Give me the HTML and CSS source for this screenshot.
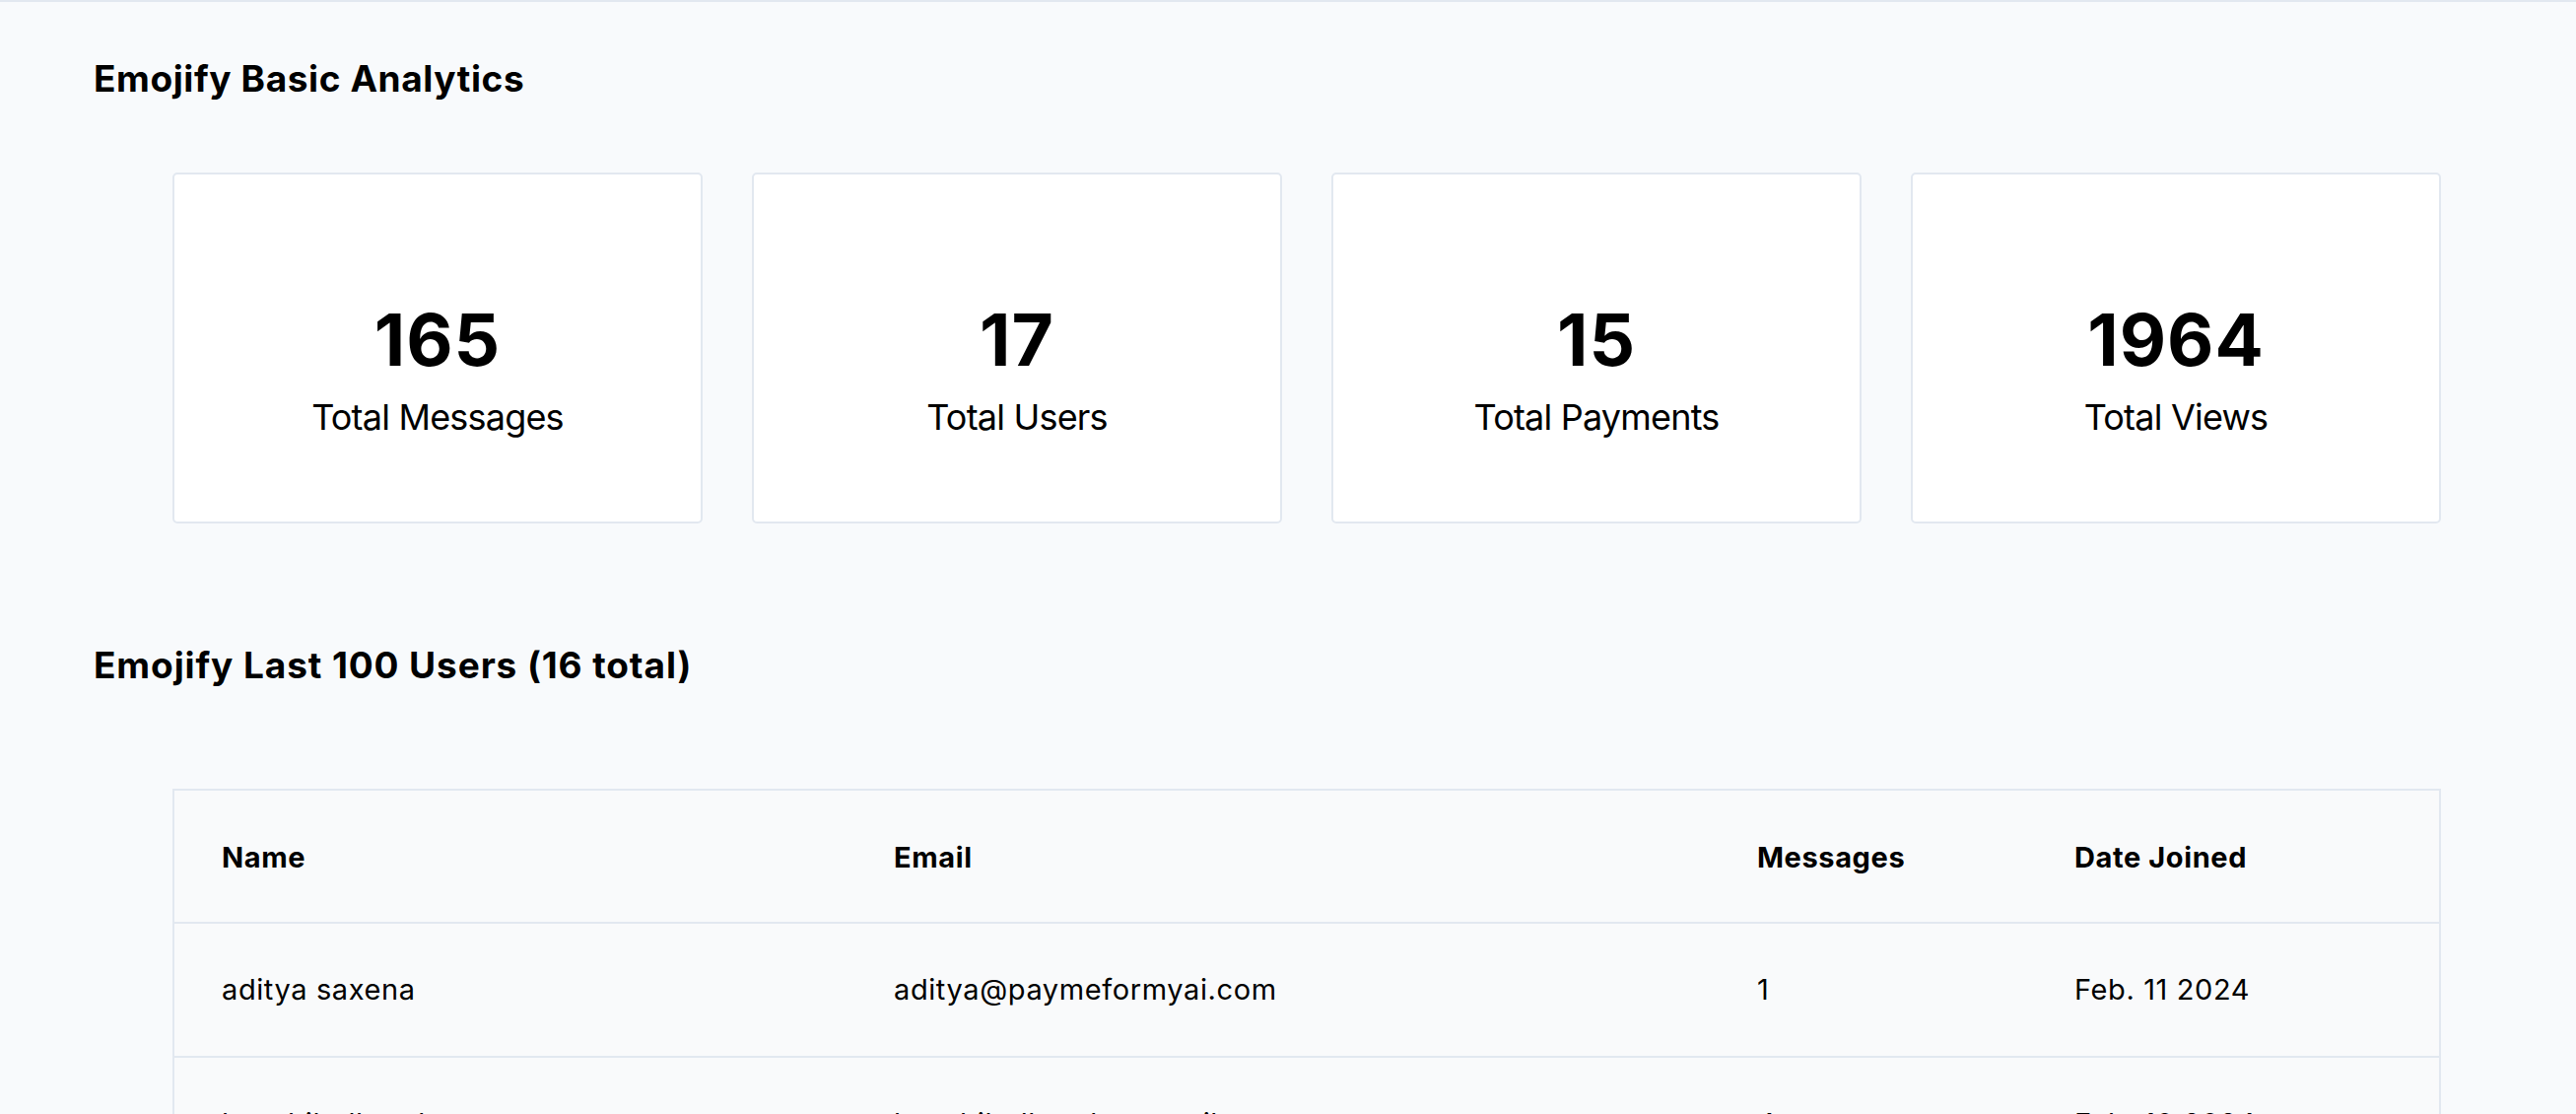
FILE: index.html
```html
<!DOCTYPE html>
<html lang="en">
<head>
<meta charset="utf-8">
<title>Emojify Analytics</title>
<link rel="stylesheet" href="styles.css">
</head>
<body>
<div class="topbar"></div>
<main class="page">
  <h2 class="section-title first">Emojify Basic Analytics</h2>
  <div class="stats">
    <div class="card"><div class="num">165</div><div class="label">Total Messages</div></div>
    <div class="card"><div class="num">17</div><div class="label">Total Users</div></div>
    <div class="card"><div class="num">15</div><div class="label">Total Payments</div></div>
    <div class="card"><div class="num">1964</div><div class="label">Total Views</div></div>
  </div>

  <h2 class="section-title second">Emojify Last 100 Users (16 total)</h2>
  <table class="users">
    <colgroup>
      <col class="c-name">
      <col class="c-email">
      <col class="c-msg">
      <col class="c-date">
    </colgroup>
    <thead>
      <tr><th>Name</th><th>Email</th><th>Messages</th><th>Date Joined</th></tr>
    </thead>
    <tbody>
      <tr><td>aditya saxena</td><td>aditya@paymeformyai.com</td><td>1</td><td>Feb. 11 2024</td></tr>
      <tr><td>kaushik dhanda</td><td>kaushik.dhanda@gmail.com</td><td>4</td><td>Feb. 10 2024</td></tr>
    </tbody>
  </table>
</main>
</body>
</html>
```

FILE: styles.css
```css
html, body {
  margin: 0;
  padding: 0;
}
body {
  background: #f8fafc;
  color: #000;
  font-family: Inter, "Noto Sans", "Liberation Sans", sans-serif;
}
.topbar {
  height: 2px;
  background: #e2e8f0;
}
.page {
  padding: 0 137px 0 95px;
}
.section-title {
  margin: 0;
  font-size: 37px;
  line-height: 56px;
  font-weight: 700;
  letter-spacing: 0.6px;
}
.section-title.first {
  margin-top: 50px;
}
.section-title.second {
  margin-top: 116px;
  letter-spacing: 0.9px;
}
.stats {
  margin-top: 67px;
  margin-left: 80px;
  display: grid;
  grid-template-columns: repeat(4, 1fr);
  gap: 50px;
}
.card {
  box-sizing: border-box;
  height: 356px;
  background: #fff;
  border: 2px solid #e2e8f0;
  border-radius: 5px;
  padding-top: 132px;
  display: flex;
  flex-direction: column;
  align-items: center;
}
.num {
  font-size: 73px;
  line-height: 72px;
  font-weight: 700;
  letter-spacing: 1px;
}
.label {
  margin-top: 14px;
  font-size: 36px;
  line-height: 56px;
  font-weight: 400;
  letter-spacing: -0.8px;
}
.users {
  margin-top: 97px;
  margin-left: 80px;
  width: calc(100% - 80px);
  table-layout: fixed;
  border-collapse: separate;
  border-spacing: 0;
  border: 2px solid #e2e8f0;
  background: #f9fafb;
  font-size: 29px;
  line-height: 40px;
}
.c-name { width: 682px; }
.c-email { width: 876px; }
.c-msg { width: 322px; }
.c-date { width: 418px; }
.users th,
.users td {
  text-align: left;
  padding: 48px 48px 45px;
  border-bottom: 2px solid #e2e8f0;
  white-space: nowrap;
}
.users th {
  font-weight: 700;
  letter-spacing: 0.6px;
}
.users td {
  font-weight: 400;
  letter-spacing: 0.6px;
  padding-top: 47px;
  padding-bottom: 47px;
}
```
